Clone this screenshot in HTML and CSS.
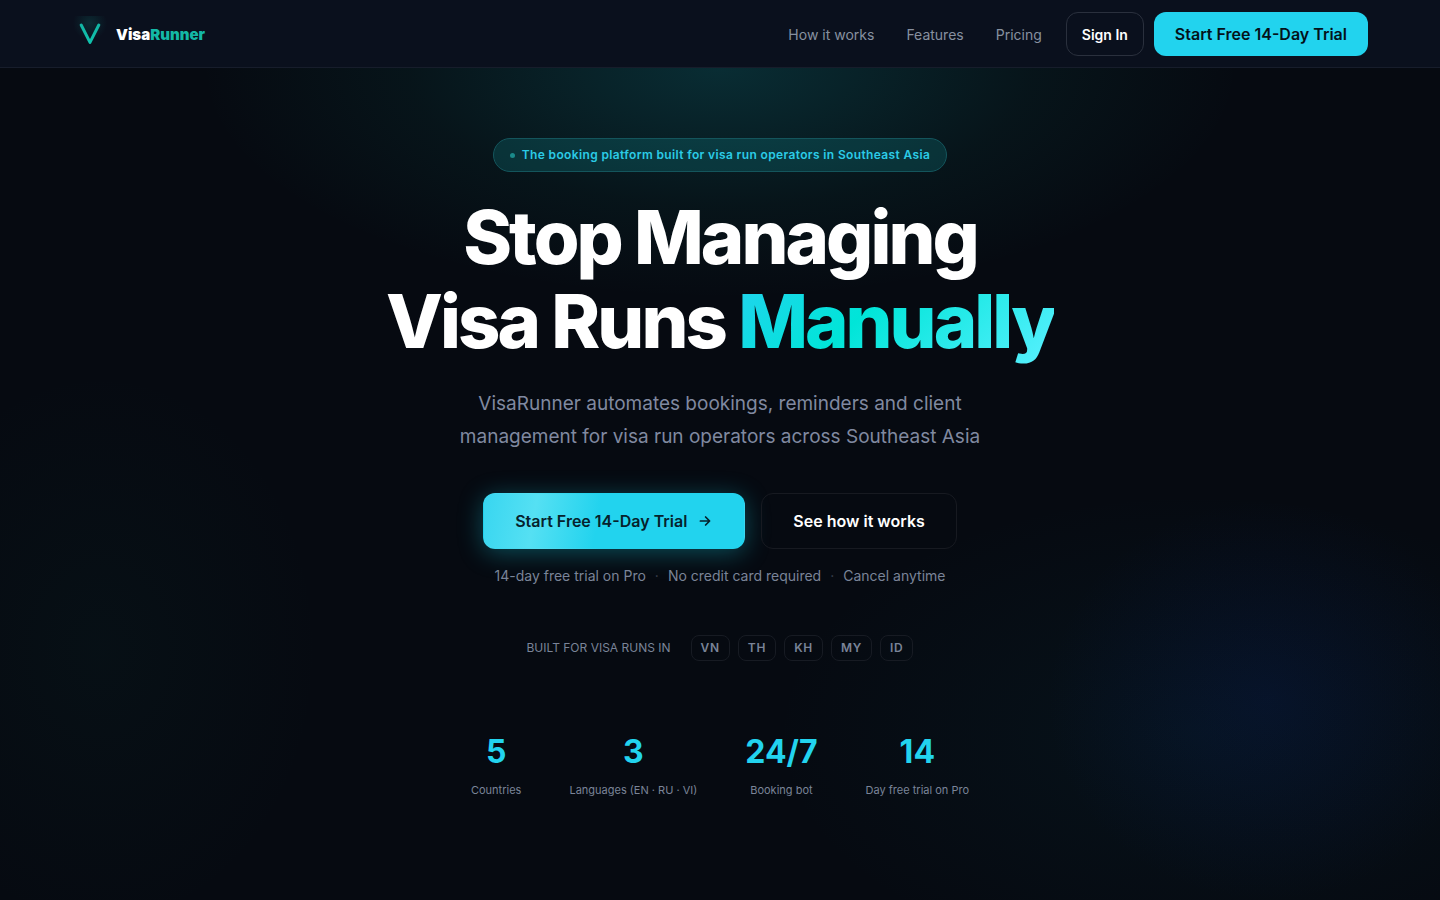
FILE: index.html
```html
<!DOCTYPE html>
<html lang="en">
<head>
<meta charset="utf-8">
<meta name="viewport" content="width=device-width, initial-scale=1">
<title>VisaRunner</title>
<link rel="stylesheet" href="styles.css">
</head>
<body>
<header class="header">
  <a class="logo" href="#">
    <svg class="logo-mark" viewBox="0 0 36 36" aria-hidden="true">
      <defs>
        <linearGradient id="mark" x1="0" y1="0" x2="0" y2="1">
          <stop offset="0" stop-color="#12b5a4"/>
          <stop offset="1" stop-color="#10c2ad"/>
        </linearGradient>
      </defs>
      <path d="M9.200 9 L18 26.400 L26.800 9" fill="none" stroke="url(#mark)" stroke-width="3" stroke-linecap="round" stroke-linejoin="round"/>
    </svg>
    <span class="logo-name">Visa<span class="logo-accent">Runner</span></span>
  </a>
  <nav class="nav">
    <a class="nav-link" href="#how">How it works</a>
    <a class="nav-link" href="#features">Features</a>
    <a class="nav-link" href="#pricing">Pricing</a>
  </nav>
  <div class="header-actions">
    <button class="btn btn-signin" type="button">Sign In</button>
    <button class="btn btn-trial" type="button">Start Free 14-Day Trial</button>
  </div>
</header>
<main class="hero">
  <p class="badge"><span class="badge-dot"></span>The booking platform built for visa run operators in Southeast Asia</p>
  <h1 class="title">Stop Managing<br>Visa Runs <span class="title-accent">Manually</span></h1>
  <p class="lead">VisaRunner automates bookings, reminders and client<br>management for visa run operators across Southeast Asia</p>
  <div class="cta">
    <button class="btn btn-primary" type="button">Start Free 14-Day Trial
      <svg class="arrow" viewBox="0 0 16 16" aria-hidden="true"><path d="M3.400 8h9M8.600 4 12.600 8l-4 4" fill="none" stroke="currentColor" stroke-width="1.700" stroke-linecap="round" stroke-linejoin="round"/></svg>
    </button>
    <button class="btn btn-secondary" type="button">See how it works</button>
  </div>
  <p class="note"><span>14-day free trial on Pro</span><span class="note-dot">·</span><span>No credit card required</span><span class="note-dot">·</span><span>Cancel anytime</span></p>
  <div class="regions">
    <span class="regions-label">Built for visa runs in</span>
    <ul class="chips">
      <li class="chip">VN</li>
      <li class="chip">TH</li>
      <li class="chip">KH</li>
      <li class="chip">MY</li>
      <li class="chip">ID</li>
    </ul>
  </div>
  <dl class="stats">
    <div class="stat"><dd class="stat-value">5</dd><dt class="stat-label">Countries</dt></div>
    <div class="stat"><dd class="stat-value">3</dd><dt class="stat-label">Languages (EN · RU · VI)</dt></div>
    <div class="stat"><dd class="stat-value">24/7</dd><dt class="stat-label">Booking bot</dt></div>
    <div class="stat"><dd class="stat-value">14</dd><dt class="stat-label">Day free trial on Pro</dt></div>
  </dl>
</main>
</body>
</html>
```
FILE: styles.css
```css
* { box-sizing: border-box; }

body {
  display: flex;
  flex-direction: column;
  margin: 0;
  min-height: 100vh;
  background: #060a11;
  color: #fff;
  font-family: Inter, "Liberation Sans", sans-serif;
}

a { color: inherit; text-decoration: none; }
p, h1, dl, dd, ul { margin: 0; padding: 0; }

.header {
  display: flex;
  align-items: center;
  padding: 12px 72px 11px;
  background: #0a101d;
  border-bottom: 1px solid #171d2b;
}

.logo {
  display: flex;
  align-items: center;
  gap: 8px;
  margin-right: auto;
}
.logo-mark {
  width: 36px;
  height: 36px;
  background: radial-gradient(circle at 50% 20%, rgba(20, 184, 166, 0.16), transparent 50%);
}
.logo-name {
  font-size: 15px;
  font-weight: 900;
}
.logo-accent { color: #14b8a6; }

.nav {
  display: flex;
  gap: 32px;
  margin-right: 24px;
}
.nav-link {
  color: #8790a0;
  font-size: 14px;
}

.header-actions { display: flex; gap: 10px; }

.btn {
  display: flex;
  align-items: center;
  border: 1px solid transparent;
  border-radius: 12px;
  font-family: inherit;
  font-weight: 600;
  white-space: nowrap;
  cursor: pointer;
}
.btn-signin {
  height: 44px;
  padding: 0 15px;
  background: transparent;
  border-color: #2a303d;
  color: #fff;
  font-size: 14px;
}
.btn-trial {
  height: 44px;
  padding: 0 20px;
  background: #22d3ee;
  color: #04121a;
  font-size: 16px;
}

.hero {
  flex: 1;
  display: flex;
  flex-direction: column;
  align-items: center;
  padding: 70px 24px 96px;
  text-align: center;
  background:
    radial-gradient(ellipse 520px 230px at 50% 0, rgba(20, 184, 190, 0.2), rgba(20, 184, 166, 0.06) 60%, transparent),
    radial-gradient(ellipse 220px 200px at 88% 76%, rgba(10, 40, 150, 0.14), transparent),
    radial-gradient(ellipse 420px 240px at 83% 80%, rgba(10, 100, 120, 0.09), transparent),
    radial-gradient(ellipse 220px 280px at 7% 70%, rgba(20, 120, 100, 0.05), transparent);
}

.badge {
  display: flex;
  align-items: center;
  gap: 7px;
  padding: 8px 16px;
  border: 1px solid #14555c;
  border-radius: 17px;
  background: rgba(20, 184, 190, 0.18);
  color: #2bcbe6;
  font-size: 12px;
  line-height: 16px;
  font-weight: 600;
  letter-spacing: 0.03em;
}
.badge-dot {
  width: 5px;
  height: 5px;
  border-radius: 50%;
  background: #1a8a8a;
}

.title {
  margin-top: 23px;
  font-size: 74px;
  line-height: 84px;
  font-weight: 800;
  letter-spacing: -0.04em;
}
.title-accent {
  background: linear-gradient(135deg, #22d3ee 0%, #00e5d8 40%, #5af0ff 100%);
  background-clip: text;
  -webkit-background-clip: text;
  color: transparent;
}

.lead {
  margin-top: 24px;
  color: #8089a0;
  font-size: 19px;
  line-height: 33px;
}

.cta {
  display: flex;
  flex-wrap: wrap;
  justify-content: center;
  gap: 16px;
  margin-top: 40px;
}
.btn-primary {
  gap: 10px;
  height: 56px;
  padding: 0 31px;
  background: linear-gradient(100deg, #38d6f0 0%, #55e0f3 20%, #22d3ee 44%);
  color: #06222c;
  font-size: 16px;
  box-shadow: 0 4px 24px rgba(20, 200, 220, 0.35);
}
.btn-secondary {
  height: 56px;
  padding: 0 31px;
  background: transparent;
  border-color: #171a21;
  color: #fff;
  font-size: 16px;
}
.arrow { width: 16px; height: 16px; }

.note {
  display: flex;
  flex-wrap: wrap;
  justify-content: center;
  gap: 9px;
  margin-top: 16px;
  color: #7a8498;
  font-size: 14px;
  line-height: 21px;
}
.note-dot { color: #3b4250; }

.regions {
  display: flex;
  flex-wrap: wrap;
  align-items: center;
  justify-content: center;
  gap: 20px;
  margin-top: 49px;
  font-size: 12px;
  line-height: 16px;
  color: #7a8498;
}
.regions-label { text-transform: uppercase; }
.chips { display: flex; gap: 8px; list-style: none; }
.chip {
  padding: 4px 9px;
  border: 1px solid #171b23;
  border-radius: 8px;
  font-weight: 600;
  letter-spacing: 0.06em;
}

.stats {
  display: flex;
  flex-wrap: wrap;
  justify-content: center;
  gap: 48px;
  margin-top: 73px;
}
.stat-value {
  color: #22d3ee;
  font-size: 32px;
  line-height: 36px;
  font-weight: 700;
}
.stat-label {
  margin-top: 11px;
  color: #7a8498;
  font-size: 11px;
  line-height: 18px;
}
```
